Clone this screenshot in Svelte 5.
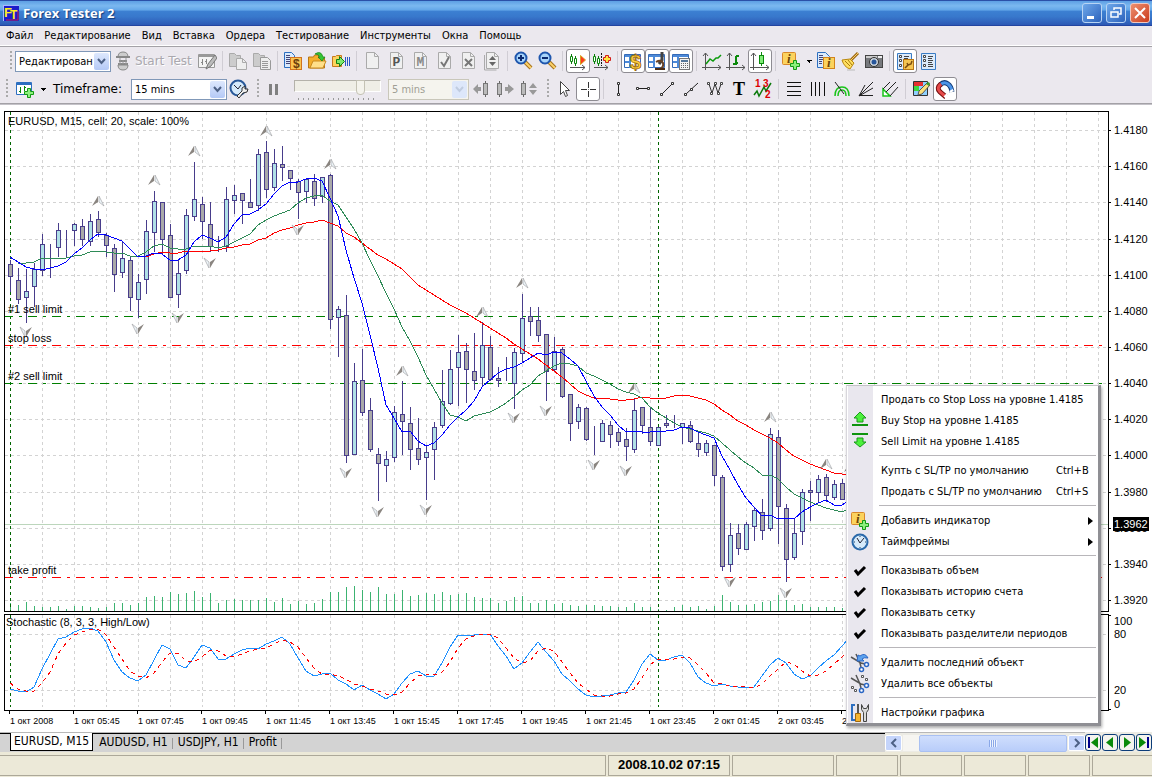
<script lang="ts">
  const menu = ["Файл", "Редактирование", "Вид", "Вставка", "Ордера", "Тестирование", "Инструменты", "Окна", "Помощь"];

  // Toolbar pictures, drawn on a 20x20 grid
  const page = `<path d="M4.500 1.500h8l4 4v12h-12z" fill="#f0f0f0" stroke="#aaa"/><path d="M12.500 1.500v4h4" fill="none" stroke="#aaa"/>`;
  const letter = (t: string, color: string) => `<text x="10.500" y="15" text-anchor="middle" font-family="Liberation Mono, monospace" font-weight="bold" font-size="13" fill="${color}">${t}</text>`;
  const axes = `<path d="M3.500 2v17M0 16.500h19" stroke="#555" fill="none"/><path d="M1 5l2.500-3 2.500 3M16 14l3 2.500-3 2.500" fill="none" stroke="#555"/>`;
  const plus = `<path d="M12.500 9.500h3v3h3v3h-3v3h-3v-3h-3v-3h3z" fill="#8cf07c" stroke="#129a12"/>`;
  const letterI = (x: number, y: number) => `<text x="${x}" y="${y}" font-family="Liberation Serif, serif" font-style="italic" font-weight="bold" font-size="13" fill="#6b4408">i</text>`;
  const info = `<rect x="1.500" y="1.500" width="13" height="12" rx="1" fill="#fbd35e" stroke="#d8882a"/>` + letterI(6, 12);
  const listing = `<path d="M2.500 2.500h14v16h-14z" fill="#dcebfb" stroke="#3a7cc4"/><path d="M4.500 4.500h2v2h-2zM4.500 8.500h2v2h-2zM4.500 13.500h2v2h-2z" fill="#fff" stroke="#444"/><path d="M9 5.500h5M9 7.500h4M9 9.500h5M9 11.500h4M9 13.500h5M9 15.500h5" stroke="#444"/>`;
  const panes = `<path d="M1.500 3.500h16v13h-16z" fill="#fff" stroke="#356bb8"/><path d="M2 5h15M7 4v13M2 11h5" stroke="#4d8ad8" stroke-width="2"/>`;
  const body = (x: number) => `<path d="M${x}.500 2v16" stroke="#666"/><rect x="${x - 2}.500" y="4.500" width="4" height="11" fill="#bbb" stroke="#777"/>`;
  const scissors = `<path d="M1 4l10 6 4 1M6 1l4 9 1 4" fill="none" stroke="#555" stroke-width="1.500"/><circle cx="16.500" cy="11.500" r="2" fill="#fff" stroke="#2b66c4" stroke-width="1.500"/><circle cx="11.500" cy="16.500" r="2" fill="#fff" stroke="#2b66c4" stroke-width="1.500"/>`;
  const clock = `<circle cx="10" cy="10" r="7.500" fill="#d6eafa" stroke="#2a69aa" stroke-width="2"/><path d="M7 6l3 5 4-5" fill="none" stroke="#223"/><path d="M10 4v1M10 15v1M4 10h1M15 10h1" stroke="#246"/>`;

  const icons: Record<string, string> = {
    tester: `<path d="M5 6q0-5 5-5t5 5z" fill="#ccc" stroke="#888"/><path d="M3 6h14M6 10h8M5 13h10" stroke="#888" stroke-width="2"/><path d="M7 7v7M13 7v7M10 9v4" stroke="#999"/><path d="M5 14h10q0 5-5 5t-5-5z" fill="#ccc" stroke="#888"/>`,
    sheetpen: `<path d="M1.500 3.500h16v13h-16z" fill="#f4f4f4" stroke="#999"/><path d="M2 5h15" stroke="#999" stroke-width="2"/><path d="M5.500 8v6M4 11.500h2M9.500 8v5M8 10.500h2" stroke="#888"/><path d="M18 4l-7 9-2 5 5-3 6-8z" fill="#bbb" stroke="#777"/>`,
    copy: `<path d="M1.500 2.500h5l2 2h4v11h-11z" fill="#ccc" stroke="#aaa"/><path d="M8.500 7.500h6l4 4v7h-10z" fill="#eee" stroke="#aaa"/><path d="M14.500 7.500v4h4" fill="none" stroke="#aaa"/>`,
    copylist: `<path d="M1.500 2.500h5l2 2h4v11h-11z" fill="#ccc" stroke="#aaa"/><path d="M8.500 6.500h7l3 3v9h-10z" fill="#eee" stroke="#999"/><path d="M10 10.500h6M10 12.500h6M10 14.500h6M10 16.500h6" stroke="#999"/>`,
    history: `<path d="M1.500 1.500h7l3 3v12h-10z" fill="#d9eafc" stroke="#2d6fc0"/><path d="M3 4.500h4M3 6.500h4M3 8.500h6M3 10.500h4M3 12.500h4" stroke="#447"/><rect x="7.500" y="6.500" width="11" height="12" fill="#f9c452" stroke="#d2741d"/><text x="10" y="17" font-family="Liberation Sans, sans-serif" font-weight="bold" font-size="12" fill="#6b3d0c">$</text>`,
    open: `<path d="M1.500 6h5l1-2h4v3h6v10h-16z" fill="#f4ae2b" stroke="#b87614"/><path d="M3 17l3-7h13l-3 7z" fill="#ffe08a" stroke="#c98a1e"/><path d="M8 3q6-4 8 3h2l-3 4-4-4h2q-1-3-5-3z" fill="#35c635" stroke="#128012" stroke-width=".7"/>`,
    run: `<path d="M1.500 5.500h3l1-1h5v11h-9z" fill="#fbd35e" stroke="#c7781c"/><path d="M5.500 8.500h3v-3l5 5-5 5v-3h-3z" fill="#7de86d" stroke="#128012"/><path d="M14.500 6v9M16.500 6v9M18.500 6v9" stroke="#2d59c4"/>`,
    blank: page,
    pageP: page + letter("P", "#555"),
    pageM: page + letter("M", "#888"),
    pageOk: page + `<path d="M7 11l3 4 5-9" stroke="#777" stroke-width="2" fill="none"/>`,
    pageX: page + `<path d="M7 8l7 7M14 8l-7 7" stroke="#777" stroke-width="2"/>`,
    pageUp: `<path d="M2.500 4v15h12" fill="none" stroke="#aaa"/>` + page + `<path d="M7 9l3.500-4 3.500 4zM7 11l3.500 4 3.500-4z" fill="#666"/>`,
    zoomin: `<path d="M12 11l6 6" stroke="#a8731c" stroke-width="4"/><path d="M12 11l6 6" stroke="#fbd26b" stroke-width="2"/><circle cx="8" cy="7" r="5.500" fill="#a7d4fa" stroke="#1e56ad" stroke-width="2"/><path d="M5 7h6M8 4v6" stroke="#0b2a70" stroke-width="2"/>`,
    zoomout: `<path d="M12 11l6 6" stroke="#a8731c" stroke-width="4"/><path d="M12 11l6 6" stroke="#fbd26b" stroke-width="2"/><circle cx="8" cy="7" r="5.500" fill="#a7d4fa" stroke="#1e56ad" stroke-width="2"/><path d="M5 7h6" stroke="#0b2a70" stroke-width="2"/>`,
    autoscroll: `<path d="M3.500 3v10M7.500 5v10" stroke="#0a7a0a"/><path d="M2.500 5.500h2v5h-2zM6.500 7.500h2v5h-2z" fill="#fff" stroke="#0a8a0a"/><path d="M12.500 4.500v9l5-4.500z" fill="#ff3b1f" stroke="#d8a020"/><path d="M2 16.500h15M14 14l3 2.500-3 2.500" stroke="#555" fill="none"/>`,
    shift: `<path d="M2.500 3v10M6.500 5v10" stroke="#0a7a0a"/><path d="M1.500 5.500h2v5h-2zM5.500 7.500h2v5h-2z" fill="#fff" stroke="#0a8a0a"/><path d="M9.500 2v13" stroke="#111" stroke-dasharray="2 1"/><path d="M13.500 4.500h3v2h2v3h-2v2h-3v-2h-2v-3h2z" fill="#ffe740" stroke="#d21c1c"/><path d="M2 16.500h14M13 14l3 2.500-3 2.500" stroke="#555" fill="none"/>`,
    account: panes + `<text x="7" y="18" font-family="Liberation Sans, sans-serif" font-weight="bold" font-size="20" fill="#ffcf3d" stroke="#98650a" stroke-width=".8">$</text>`,
    journal: panes + `<path d="M15 1v8l-3 4" stroke="#444" stroke-width="3" fill="none"/><path d="M9 11q5-3 7 1 1 4-3 6" stroke="#6a4326" stroke-width="2" fill="none"/><path d="M8 18h10" stroke="#4a2c14" stroke-width="2"/>`,
    calc: panes + `<rect x="8.500" y="7.500" width="10" height="11" fill="#f4f4f4" stroke="#777"/><path d="M10 10h7" stroke="#579" stroke-width="2"/><path d="M10 12.500h7M10 14.500h7M10 16.500h7" stroke="#666" stroke-dasharray="1 1"/>`,
    line: axes + `<path d="M4 13l4-5 3 2 3-3h2l3-3" stroke="#0b9a0b" stroke-width="1.500" fill="none"/>`,
    bars: axes + `<path d="M7 13h3v-8M10 5h3M10 12h2" stroke="#0b8a0b" stroke-width="2" fill="none"/>`,
    candles: axes + `<path d="M11.500 1v14" stroke="#0b8a0b"/><rect x="9.500" y="4.500" width="4" height="8" fill="#7fec77" stroke="#0b8a0b"/>`,
    indicator: info + plus,
    indlist: `<path d="M1.500 1.500h8l4 4v11h-12z" fill="#d9eafc" stroke="#2d6fc0"/><path d="M3 4.500h4M3 6.500h4M3 8.500h4M3 10.500h3M3 12.500h3" stroke="#447"/><rect x="7.500" y="6.500" width="11" height="11" fill="#fbd35e" stroke="#d2841d"/>` + letterI(11, 16),
    broom: `<path d="M11 9l7-7" stroke="#a06a14" stroke-width="3"/><path d="M11 9l7-7" stroke="#f5cf6a"/><path d="M2 9l8-1 4 4-4 6q-6-2-8-9z" fill="#ffdf60" stroke="#b8860b"/><path d="M5 10l5 5M8 9l4 5" stroke="#a77a10"/><path d="M7 19h8" stroke="#bbb"/>`,
    camera: `<rect x="1.500" y="4.500" width="17" height="12" fill="#77797d" stroke="#444"/><path d="M2 6h11" stroke="#ccc" stroke-width="2"/><path d="M14 6h4" stroke="#eee" stroke-width="2"/><circle cx="10" cy="11" r="4.500" fill="#cdd5dd" stroke="#333"/><circle cx="10" cy="11" r="2.500" fill="#27559a"/>`,
    listset: listing + `<rect x="8.500" y="8.500" width="10" height="10" fill="#f5c550" stroke="#b87614"/><path d="M10 17l3-3-1-2M13 14l3-1 1-3" stroke="#7a4c0d" stroke-width="1.500" fill="none"/>`,
    list: listing,
    newchart: `<path d="M1.500 3.500h15v12h-15z" fill="#fff" stroke="#2d6fc0"/><path d="M2 5h14" stroke="#2d6fc0" stroke-width="2"/><path d="M5.500 8v6M4 12.500h1M9.500 7v5M9 8.500h2" stroke="#0b8a0b"/>` + plus,
    clocktool: `<circle cx="9" cy="9" r="7.500" fill="#d6eafa" stroke="#2a5a9a" stroke-width="2"/><path d="M5 6l4 4 3-4" fill="none" stroke="#223"/><path d="M8 17l5-5 0-3 3-2 0 3 3 0-1 3-4 1-4 5z" fill="#eee" stroke="#333"/>`,
    pause: `<path d="M5 5h3v11h-3zM11 5h3v11h-3z" fill="#808080"/>`,
    moveleft: `<path d="M7 5v3h3v4h-3v3l-5-5z" fill="#999"/>` + body(14),
    moveright: `<path d="M13 5v3h-3v4h3v3l6-5z" fill="#999"/>` + body(4),
    moveboth: `<path d="M10 9l4-5 4 5zM10 11l4 5 4-5z" fill="#999"/>` + body(4),
    pointer: `<path d="M6.500 2.500v13l3-3 2 5 2-1-2-5h4z" fill="#fff" stroke="#444"/>`,
    cross: `<path d="M10.500 3v6M10.500 12v6M3 10.500h6M12 10.500h6" stroke="#333"/><path d="M10 10.500h1" stroke="#777"/>`,
    vline: `<path d="M9.500 5v10" stroke="#222"/><path d="M8.500 3.500h2v2h-2zM8.500 14.500h2v2h-2z" fill="#fff" stroke="#333"/>`,
    hline: `<path d="M5 9.500h10" stroke="#222"/><path d="M3.500 8.500h2v2h-2zM14.500 8.500h2v2h-2z" fill="#fff" stroke="#333"/>`,
    trend: `<path d="M5 15l10-10" stroke="#222"/><path d="M3.500 14.500h2v2h-2zM14.500 3.500h2v2h-2z" fill="#fff" stroke="#333"/>`,
    ray: `<path d="M5 15l12-11" stroke="#222"/><path d="M3.500 14.500h2v2h-2zM9.500 9.500h2v2h-2z" fill="#fff" stroke="#333"/>`,
    poly: `<path d="M4 5l3 9 3-9 3 9 3-9" stroke="#333" fill="none"/><path d="M2.500 3.500h2v2h-2zM5.500 13.500h2v2h-2zM9.500 3.500h2v2h-2zM12.500 13.500h2v2h-2zM15.500 3.500h2v2h-2z" fill="#fff" stroke="#444"/>`,
    text: `<text x="4" y="16" font-family="Liberation Serif, serif" font-size="18" font-weight="bold">T</text>`,
    waves: `<path d="M1 16l3-4 2 5 5-9 2 4 5-8" stroke="#0b7a0b" fill="none" stroke-width="1.500"/><g fill="#d00" font-family="Liberation Sans, sans-serif" font-size="10" font-weight="bold"><text x="2" y="8">1</text><text x="10" y="8">3</text><text x="12" y="19">2</text></g>`,
    levels: `<path d="M3 3.500h14M3 7.500h14M3 12.500h14M3 16.500h14" stroke="#111"/>`,
    columns: `<path d="M3.500 3v14M7.500 3v14M11.500 3v14M16.500 3v14" stroke="#111"/>`,
    arcs: `<path d="M3 17q0-9 7-9t7 9M6 17q0-6 4-6t4 6" fill="none" stroke="#19c419" stroke-width="1.500"/><path d="M3 3l9 12" stroke="#222"/>`,
    fan: `<path d="M3 17l14-14M3 17l14-8M3 16.500h14M3 17l6-11" stroke="#222" fill="none"/>`,
    pitchfork: `<path d="M3 17v-7l7 7z" fill="#fff" stroke="#19c419" stroke-width="1.500"/><path d="M3 10l7-7M6 13l10-10M10 17l8-9" stroke="#222"/>`,
    colors: `<path d="M2.500 2.500h14v14h-14z" fill="#8fd0ff" stroke="#333"/><path d="M3 3h9v4h-9z" fill="#e83030"/><path d="M3 7h5v5h-5z" fill="#3fd83f"/><path d="M7 16l1-4 8-8 3 2-8 9z" fill="#fbe07a" stroke="#555"/><path d="M15 5l2-2 2 1-1 3z" fill="#3a9a2a"/>`,
    magnet: `<g fill="none"><path d="M5 6q4-4 8-1 3 2 4 8" stroke="#123a78" stroke-width="5"/><path d="M5 6q4-4 8-1 3 2 4 7" stroke="#4b94e8" stroke-width="3"/><path d="M6 5q-5 4-1 8l6 5" stroke="#761010" stroke-width="5"/><path d="M6 5q-5 4-1 8l5 4" stroke="#e64a4a" stroke-width="3"/><path d="M16 11l1 2M10 16l2 2" stroke="#fff" stroke-width="4"/></g>`,
    buystop: `<path d="M10 1l6 6h-3v4h-6v-4h-3z" fill="#4cf03c" stroke="#1a9a1a"/><path d="M2 14h16" stroke="#0e940e" stroke-width="2"/>`,
    selllimit: `<path d="M2 2h16" stroke="#0e940e" stroke-width="2"/><path d="M10 15l6-5h-3v-4h-6v4h-3z" fill="#4cf03c" stroke="#1a9a1a"/>`,
    clock,
    check: `<path d="M5 9l3 4 7-7" stroke="#000" stroke-width="3" fill="none"/>`,
    undo: scissors + `<path d="M7 8l1-6 2 1q5-4 8 2-4-1-6 1l2 2z" fill="#5ba2ee" stroke="#2b66c4"/>`,
    clear: scissors + `<path d="M11.500 1.500h2v2h-2zM15.500 4.500h2v2h-2zM1.500 12.500h2v2h-2zM4.500 15.500h2v2h-2z" fill="#fff" stroke="#555"/>`,
    settings: `<path d="M5 2h-3v15h4" stroke="#2d6fc0" fill="none" stroke-width="2"/><path d="M8 1v9" stroke="#555" stroke-width="2"/><path d="M5.500 10.500h5v8h-5z" fill="#f5b52f" stroke="#a2680b"/><path d="M11.500 1.500v5l2 3v9h3v-9l2-3v-5l-2 4h-3z" fill="#d8d8d8" stroke="#444"/>`
  };

  // "|" is a separator, a leading "!" marks a pressed button
  const files = "copy copylist | history open run | blank pageP pageM pageOk pageX pageUp | zoomin zoomout | !autoscroll shift | !account !journal !calc | line bars !candles | indicator".split(" ");
  const views = "indlist broom camera | !listset list".split(" ");
  const moves = "moveleft moveright moveboth".split(" ");
  const drawing = "pointer !cross | vline hline trend ray poly text waves | levels columns arcs fan pitchfork | colors !magnet".split(" ");

  const STEP = 8;
  const X0 = 10;
  const px = (i: number) => X0 + STEP * i;
  const toPath = (ys: number[], from = 0) =>
    ys.map((y, i) => `${i ? "L" : "M"}${px(i + from)} ${y}`).join("");

  // high, body top, body bottom, low, rising
  const bars = [
    [260,264,276,292,0],[268,280,299,304,0],[269,291,297,323,1],[263,269,286,307,1],[234,244,270,276,1],
    [244,248,248,278,0],[223,230,247,257,1],[230,232,232,257,0],[223,224,230,246,1],[219,226,239,246,0],
    [214,221,241,246,1],[211,219,232,237,0],[233,235,245,257,0],[244,248,274,292,0],[241,258,272,278,1],
    [257,260,297,311,0],[274,282,299,318,1],[220,231,279,294,1],[191,201,232,252,1],[202,202,239,254,0],
    [224,235,297,298,0],[260,273,294,308,1],[209,215,270,274,1],[162,199,216,221,1],[197,204,221,239,0],
    [202,224,246,252,0],[236,244,244,252,0],[187,199,246,252,1],[185,195,200,214,1],[193,193,200,224,0],
    [179,202,207,208,0],[149,154,205,211,1],[141,152,189,198,0],[149,163,187,191,1],[146,164,167,181,0],
    [170,170,178,190,0],[179,181,192,219,0],[178,179,191,203,1],[174,181,198,206,0],[177,177,196,203,1],
    [174,175,319,329,0],[306,309,317,357,1],[295,315,455,463,0],[363,381,454,455,1],[349,380,412,416,0],
    [398,410,449,452,0],[448,454,463,501,0],[451,459,465,482,1],[406,412,457,462,1],[381,414,421,455,0],
    [407,423,449,470,0],[418,448,459,465,0],[445,452,457,500,1],[422,427,449,480,1],[370,401,425,428,1],
    [350,369,403,405,1],[335,352,367,406,1],[343,351,369,403,0],[333,371,380,390,0],[322,345,377,387,1],
    [336,347,379,381,0],[367,378,380,387,0],[357,380,380,381,0],[348,352,383,409,1],[294,318,353,363,1],
    [307,316,321,336,0],[307,320,335,342,0],[334,334,371,401,0],[337,351,369,372,1],[347,349,396,398,0],
    [394,394,423,441,0],[404,407,421,429,1],[407,408,439,441,0],[426,440,440,455,0],[420,423,441,442,1],
    [421,425,434,448,0],[428,432,441,446,0],[428,439,446,461,0],[399,410,449,453,1],[407,407,425,434,0],
    [408,427,441,446,0],[427,427,445,445,1],[415,423,425,428,0],[415,425,425,428,0],[423,423,427,444,1],
    [421,425,441,443,0],[431,443,449,457,0],[440,443,452,456,1],[445,445,475,486,0],[475,477,566,571,0],
    [523,535,564,572,1],[524,533,548,555,0],[522,524,549,550,1],[507,510,526,541,1],[499,512,530,540,0],
    [428,434,528,531,1],[430,437,506,544,0],[504,508,559,582,0],[518,533,557,560,1],[489,492,531,545,1],
    [481,490,492,521,0],[475,479,492,503,1],[474,477,495,502,0],[480,484,497,500,1],[479,483,499,499,0]
  ];

  const fast = [257,262,267,269,270,268,266,262,254,248,240,234,235,238,241,249,257,256,253,254,260,260,255,242,235,238,242,237,224,215,214,210,204,194,186,182,182,179,178,181,198,216,250,278,303,335,368,405,418,432,431,441,446,443,435,425,417,410,401,387,380,373,369,367,363,358,353,355,352,353,359,366,381,396,407,415,425,432,431,432,432,431,431,430,427,428,432,435,438,456,470,485,498,507,516,515,519,518,519,512,507,503,500,505,505,500];
  const medium = [263,263,262,258,258,258,258,256,255,252,251,252,253,253,256,256,252,246,244,248,249,249,246,246,246,248,246,242,238,234,225,220,216,213,210,203,198,196,195,201,205,217,229,243,260,276,293,309,327,341,357,375,389,403,415,417,421,416,414,412,408,403,397,390,385,376,371,366,363,364,366,373,376,380,384,389,392,394,398,407,413,418,423,427,429,431,433,436,443,450,457,463,468,475,475,479,487,494,498,502,505,508,510,512,508];
  const slow = [257,254,252,253,253,251,251,251,251,250,248,247,245,244,240,238,233,230,228,225,223,222,220,223,226,233,237,243,249,255,259,264,269,277,285,290,295,300,305,309,313,318,323,328,333,338,344,349,354,359,365,371,377,384,391,395,398,398,399,400,400,399,397,398,398,398,396,395,396,398,400,404,410,415,421,425,430,434,438,443,450,456,460,464,467,470,473,474,474];
  const volume = [8,6,9,5,4,4,5,2,5,5,4,3,4,8,8,6,8,14,15,14,19,17,18,20,14,18,8,11,12,11,11,11,13,9,13,7,10,7,8,12,19,19,24,25,21,19,24,17,17,21,15,16,18,17,19,16,17,18,14,13,13,8,10,14,15,8,8,11,7,8,6,5,6,6,5,5,4,4,8,4,4,2,1,4,6,4,5,2,5,16,9,6,6,7,9,10,16,11,6,7,4,4,4,4,3];

  const main = [689,691,692,687,669,654,639,637,632,629,628,631,642,660,672,678,681,675,660,645,649,665,668,657,645,648,659,659,654,650,648,649,644,641,637,644,658,671,676,674,673,680,684,690,685,690,694,699,694,683,674,671,676,676,663,647,635,635,635,634,634,646,656,669,663,652,642,652,661,674,681,689,695,697,696,695,693,692,680,664,654,660,660,657,655,663,677,683,686,684,686,687,688,687,676,665,658,663,674,679,676,668,661,655,646,637];
  const signal = [683,689,691,691,683,672,654,643,635,632,629,629,635,647,659,671,676,678,673,662,653,653,661,662,657,650,651,656,657,654,651,649,648,644,640,642,647,658,668,674,674,676,679,684,686,689,691,694,695,692,683,676,674,675,672,662,648,639,636,634,634,638,648,658,663,661,651,648,651,662,673,683,689,695,696,696,694,693,689,678,665,659,659,659,657,658,665,673,683,684,686,686,687,688,684,676,669,662,664,671,676,675,671,664,657,649];

  const tops = [[98,201],[154,180],[194,151],[266,131],[330,164],[522,283],[482,312],[402,371],[634,388],[770,417],[826,464],[850,467]];
  const bottoms = [[26,332],[138,329],[178,318],[210,263],[298,230],[346,473],[378,512],[426,510],[514,418],[546,411],[594,465],[626,471],[730,582],[786,593]];

  const prices = [130,166,202,239,275,311,347,383,419,455,492,528,564,600].map((y, i) => ({ y, label: (1.418 - i * 0.002).toFixed(4) }));
  const columns = Array.from({ length: 60 }, (_, i) => X0 + 32 * (i + 1));
  const dividers = [10, 658];
  const orders = [
    { y: 316, name: "#1 sell limit", color: "#008000" },
    { y: 345, name: "stop loss", color: "#f00" },
    { y: 383, name: "#2 sell limit", color: "#008000" },
    { y: 577, name: "take profit", color: "#f00" }
  ];
  const times = ["1 окт 2008", "1 окт 05:45", "1 окт 07:45", "1 окт 09:45", "1 окт 11:45", "1 окт 13:45", "1 окт 15:45", "1 окт 17:45", "1 окт 19:45", "1 окт 21:45", "1 окт 23:45", "2 окт 01:45", "2 окт 03:45", "2 окт 05:45"];

  type Item = { label: string; icon?: string; keys?: string; sub?: boolean };
  const groups: Item[][] = [
    [
      { label: "Продать со Stop Loss на уровне 1.4185" },
      { label: "Buy Stop на уровне 1.4185", icon: "buystop" },
      { label: "Sell Limit на уровне 1.4185", icon: "selllimit" }
    ],
    [
      { label: "Купть с SL/TP по умолчанию", keys: "Ctrl+B" },
      { label: "Продать с SL/TP по умолчанию", keys: "Ctrl+S" }
    ],
    [
      { label: "Добавить индикатор", icon: "indicator", sub: true },
      { label: "Таймфреймы", icon: "clock", sub: true }
    ],
    [
      { label: "Показывать объем", icon: "check" },
      { label: "Показывать историю счета", icon: "check" },
      { label: "Показывать сетку", icon: "check" },
      { label: "Показывать разделители периодов", icon: "check" }
    ],
    [
      { label: "Удалить последний объект", icon: "undo" },
      { label: "Удалить все объекты", icon: "clear" }
    ],
    [{ label: "Настройки графика", icon: "settings" }]
  ];

  const tabs = ["EURUSD, M15", "AUDUSD, H1", "USDJPY, H1", "Profit"];
  let active = $state("EURUSD, M15");

  const jumps = [
    { name: "В начало", d: "M12 2v11l-7-5.500z", bar: 3 },
    { name: "Назад", d: "M10 2v11l-7-5.500z" },
    { name: "Вперед", d: "M4 2v11l7-5.500z" },
    { name: "В конец", d: "M2 2v11l7-5.500z", bar: 11 }
  ];
</script>

{#snippet glyph(name: string)}
  <svg class="glyph" width="20" height="20" viewBox="0 0 20 20" aria-hidden="true">{@html icons[name]}</svg>
{/snippet}

{#snippet tools(list: string[])}
  {#each list as t}
    {#if t === "|"}
      <span class="sep"></span>
    {:else}
      <button class="tool" class:on={t[0] === "!"} aria-label={t.replace("!", "")}>{@render glyph(t.replace("!", ""))}</button>
    {/if}
  {/each}
{/snippet}

{#snippet drop()}
  <span class="arrow"><svg width="9" height="7" viewBox="0 0 9 7"><path d="M1 1l3.500 4 3.500-4" fill="none" stroke="currentColor" stroke-width="2" /></svg></span>
{/snippet}

<div class="app">
  <header class="title">
    <svg width="16" height="16" viewBox="0 0 16 16" aria-hidden="true">
      <rect width="16" height="16" rx="1" fill="#1c1cc8" />
      <path d="M0 0h16M0 0v16" stroke="#aab4ff" stroke-width="2" />
      <path d="M3 15h12v-9" stroke="#c02050" fill="none" />
      <text x="1" y="12" font-size="13">F</text>
      <text x="7" y="14" font-size="12">T</text>
    </svg>
    <h1>Forex Tester 2</h1>
    <button class="win" aria-label="Свернуть"><svg width="18" height="18" viewBox="0 0 18 18"><path d="M4 13.500h7" stroke="#fff" stroke-width="3" /></svg></button>
    <button class="win" aria-label="Восстановить"><svg width="18" height="18" viewBox="0 0 18 18"><path d="M7 6v-2h7v6h-2" fill="none" stroke="#fff" stroke-width="1.500" /><rect x="4" y="8" width="7" height="5" fill="none" stroke="#fff" stroke-width="1.500" /></svg></button>
    <button class="win close" aria-label="Закрыть"><svg width="18" height="18" viewBox="0 0 18 18"><path d="M4 4l10 10M14 4l-10 10" stroke="#fff" stroke-width="2" /></svg></button>
  </header>

  <nav class="menu">
    {#each menu as m}<button>{m}</button>{/each}
  </nav>

  <div class="bars">
    <div class="bar">
      <span class="grip first"></span>
      <div class="combo">
        <select aria-label="Режим"><option>Редактирование</option></select>
        {@render drop()}
      </div>
      <button class="tool start" disabled>{@render glyph("tester")}<span>Start Test</span></button>
      {@render tools(["sheetpen", "|"])}
      {@render tools(files)}
      <button class="more" aria-label="Еще"></button>
      {@render tools(views)}
    </div>
    <div class="bar">
      <span class="grip"></span>
      {@render tools(["newchart"])}
      <button class="more" aria-label="Еще"></button>
      <label class="frame" for="tf">Timeframe:</label>
      <div class="combo">
        <select id="tf"><option>15 mins</option></select>
        {@render drop()}
      </div>
      {@render tools(["clocktool"])}
      <span class="grip mid"></span>
      {@render tools(["pause"])}
      <div class="speed"><input type="range" min="0" max="100" value="80" aria-label="Скорость" disabled /></div>
      <div class="combo off">
        <select aria-label="Шаг" disabled><option>5 mins</option></select>
        {@render drop()}
      </div>
      {@render tools(moves)}
      <span class="grip mid"></span>
      {@render tools(drawing)}
    </div>
  </div>

  <main class="work">
    <div class="plots">
      <svg class="pane" width="100%" height="501">
        <g transform="translate(-4 -111)" shape-rendering="crispEdges">
          <g class="grid">
            {#each columns as x}<path d="M{x}.5 112V611" />{/each}
            {#each prices as p}<path d="M5 {p.y}.5H4000" />{/each}
          </g>
          <path d="M5 524.500H4000" stroke="#bcd6bc" />
          {#each volume as v, i}<path d="M{px(i)}.500 611v-{v}" stroke="#3cb371" />{/each}
          {#each dividers as x}<path class="divider" d="M{x}.500 112V611" />{/each}
          {#each orders as o}<path d="M4 {o.y}.500H4000" stroke={o.color} stroke-dasharray="9 6 3 6" />{/each}
          {#each bars as [high, top, bottom, low, up], i}
            <path d="M{px(i)}.500 {high}V{low}" stroke="#483d8b" />
            <rect x={px(i) - 2 + 0.5} y={top + 0.5} width="4" height={bottom - top} fill={up ? "#b0e0e6" : "#a9a9a9"} stroke="#483d8b" />
          {/each}
          <path class="curve" d={toPath(slow, 17)} stroke="#f00" />
          <path class="curve" d={toPath(medium, 1)} stroke="#2e8b57" />
          <path class="curve" d={toPath(fast)} stroke="#00f" />
        </g>
        <g transform="translate(-4 -111)">
          {#each tops as [x, y]}
            <path d="M{x} {y - 5}l-6 10 6-4z" fill="#8a8580" />
            <path d="M{x + 1} {y - 5}l5 10-5-4z" fill="#eef6fa" stroke="#a5a5a8" stroke-width=".7" />
          {/each}
          {#each bottoms as [x, y]}
            <path d="M{x} {y + 5}l6-10-6 4z" fill="#8a8580" />
            <path d="M{x - 1} {y + 5}l-5-10 5 4z" fill="#eef6fa" stroke="#a5a5a8" stroke-width=".7" />
          {/each}
          <text x="8" y="125">EURUSD, M15, cell: 20, scale: 100%</text>
          {#each orders as o}<text x="8" y={o.y - 3}>{o.name}</text>{/each}
        </g>
      </svg>
      <svg class="pane" width="100%" height="97">
        <g transform="translate(-4 -614)" shape-rendering="crispEdges">
          <g class="grid">
            {#each columns as x}<path d="M{x}.5 615V707" />{/each}
            <path d="M5 634.500H4000M5 690.500H4000" />
          </g>
          {#each dividers as x}<path class="divider" d="M{x}.500 615V707" />{/each}
          <path class="curve" d={toPath(main)} stroke="#1e90ff" />
          <path class="curve" d={toPath(signal)} stroke="#f00" stroke-dasharray="4 4" />
        </g>
        <text x="2" y="12">Stochastic (8, 3, 3, High/Low)</text>
      </svg>
      <svg class="dates" width="100%" height="21">
        {#each times as t, i}
          <path d="M{5 + 64 * i}.500 0v3" stroke="#000" />
          <text x={6 + 64 * i} y="13">{t}</text>
        {/each}
      </svg>
    </div>
    <svg class="scale" width="43" height="621">
      <g transform="translate(-1109 -111)">
        {#each prices as p}
          <path d="M1109 {p.y}.500h2" stroke="#000" />
          <text x="1114" y={p.y + 4}>{p.label}</text>
        {/each}
        <rect x="1113" y="517" width="36" height="14" />
        <text x="1114" y="528" fill="#fff">1.3962</text>
        <path d="M1109 615.500h2M1109 709.500h2" stroke="#000" />
        <text x="1114" y="625">100</text>
        <text x="1114" y="638">80</text>
        <text x="1114" y="694">20</text>
        <text x="1114" y="708">0</text>
      </g>
    </svg>

    <div class="popup" role="menu">
      {#each groups as group, g}
        {#if g}<hr />{/if}
        {#each group as item}
          <button role="menuitem">
            <span class="mark">{#if item.icon}{@render glyph(item.icon)}{/if}</span>
            <span class="name">{item.label}</span>
            {#if item.keys}<kbd>{item.keys}</kbd>{/if}
            {#if item.sub}<i class="sub"></i>{/if}
          </button>
        {/each}
      {/each}
    </div>
  </main>

  <div class="sheets">
    <div class="tabs">
      {#each tabs as t}
        <button class:active={t === active} onclick={() => (active = t)}>{t}</button>
      {/each}
    </div>
    <div class="scroll">
      <button class="step" aria-label="Влево"><svg width="8" height="10" viewBox="0 0 8 10"><path d="M6 1l-4 4 4 4" fill="none" stroke="#4d6185" stroke-width="2" /></svg></button>
      <div class="track"><div class="thumb"></div></div>
      <button class="step" aria-label="Вправо"><svg width="8" height="10" viewBox="0 0 8 10"><path d="M2 1l4 4-4 4" fill="none" stroke="#4d6185" stroke-width="2" /></svg></button>
    </div>
    <div class="jumps">
      {#each jumps as j}
        <button aria-label={j.name}><svg width="14" height="15" viewBox="0 0 14 15"><path d={j.d} fill="#0a8a0a" />{#if j.bar}<path d="M{j.bar} 2v11" stroke="#00008b" stroke-width="2" />{/if}</svg></button>
      {/each}
    </div>
  </div>

  <footer class="status">
    <span class="wide"></span>
    <span class="time">2008.10.02 07:15</span>
    <span class="mid"></span>
    <span></span>
    <span></span>
    <span></span>
    <span></span>
    <span class="last"></span>
  </footer>
</div>

<style>
  :global(body) {
    background: #ece9d8;
    overflow: hidden;
  }

  .app {
    --ui: Tahoma, "DejaVu Sans Condensed", "DejaVu Sans", sans-serif;
    --face: #ebe8ee;
    min-height: 100vh;
    display: flex;
    flex-direction: column;
    font: 11px/14px var(--ui);
    color: #000;
  }

  button {
    font: inherit;
    color: inherit;
    border: 0;
    padding: 0;
    background: none;
  }

  svg {
    display: block;
    flex: none;
  }

  /* window caption */
  .title {
    height: 26px;
    box-sizing: border-box;
    display: flex;
    align-items: center;
    gap: 4px;
    padding: 0 2px 0 3px;
    border-top: 1px solid #2b50a8;
    border-bottom: 1px solid #2344a0;
    background: linear-gradient(#5d9fe4, #7bb8f0 20%, #63a6e8 38%, #3c80d2 42%, #3878cc 65%, #2c58b4);
    color: #fff;
  }

  .title text {
    font-family: "Liberation Sans", sans-serif;
    font-weight: bold;
    fill: #ffee20;
  }

  .title h1 {
    flex: 1;
    margin: 0;
    font: bold 13px/18px "Open Sans", sans-serif;
    text-shadow: 1px 1px 1px #123a7c;
  }

  .win {
    width: 20px;
    height: 20px;
    box-sizing: border-box;
    border: 1px solid #b8d4f4;
    border-radius: 3px;
    background: linear-gradient(135deg, #6ea8ea, #2c62bc);
  }

  .close {
    background: linear-gradient(135deg, #ec9070, #cc3c1c);
    border-color: #f0c8c0;
  }

  .menu {
    display: flex;
    gap: 11px;
    height: 19px;
    padding-left: 6px;
    background: var(--face);
    border-bottom: 1px solid #fff;
  }

  .bars {
    background: var(--face);
    border-top: 1px solid #a3a1a6;
    border-bottom: 1px solid #a3a1a6;
  }

  .bar {
    display: flex;
    align-items: center;
    height: 28px;
  }

  .grip {
    width: 3px;
    height: 20px;
    margin: 0 4px 0 6px;
    background: radial-gradient(circle at 1px 1px, #aaa 1px, #fff0 1px) 0 0 / 3px 4px;
  }

  .grip.first {
    margin: 0 2px 0 10px;
  }

  .grip.mid {
    margin: 0 2px 0 6px;
  }

  .tool {
    flex: none;
    width: 24px;
    height: 24px;
    box-sizing: border-box;
    display: flex;
    align-items: center;
    justify-content: center;
  }

  .tool.on {
    border: 1px solid #8e8c92;
    border-radius: 3px;
    background: #fff;
  }

  .start {
    width: 84px;
    justify-content: flex-start;
    gap: 2px;
    padding-left: 2px;
    font: 12px/16px "DejaVu Sans", sans-serif;
    color: #aaa8ae;
    text-shadow: 1px 1px #fff;
    white-space: nowrap;
  }

  .sep {
    flex: none;
    width: 1px;
    height: 20px;
    margin: 0 3px;
    background: #d0cdd4;
  }

  .more {
    flex: none;
    width: 11px;
    height: 20px;
    background: conic-gradient(from -45deg at 50% 100%, #000 90deg, #0000 0) 50% 50% / 6px 3px no-repeat;
  }

  .frame {
    margin: 0 10px 0 5px;
    width: 68px;
    font: 12px/16px "DejaVu Sans", sans-serif;
    white-space: nowrap;
  }

  .combo {
    flex: none;
    display: grid;
    width: 96px;
    height: 21px;
    box-sizing: border-box;
    border: 1px solid #8098b8;
    background: #fff;
  }

  .combo select,
  .combo .arrow {
    grid-area: 1 / 1;
  }

  .combo select {
    appearance: none;
    min-width: 0;
    width: 100%;
    height: 19px;
    padding: 0 17px 0 3px;
    border: 0;
    background: none;
    font: 11px/17px var(--ui);
    color: #000;
  }

  .arrow {
    justify-self: end;
    width: 15px;
    height: 17px;
    margin: 1px;
    display: flex;
    align-items: center;
    justify-content: center;
    border-radius: 2px;
    background: linear-gradient(#dde8fd, #b4c9f6);
    color: #4d6185;
    pointer-events: none;
  }

  .combo.off {
    width: 81px;
    border-color: #c9c7ba;
    background: #f5f4ee;
  }

  .combo.off select {
    color: #a19f95;
    opacity: 1;
  }

  .combo.off .arrow {
    color: #c0cce0;
    background: #dde7fa;
  }

  .speed {
    flex: none;
    width: 87px;
    height: 22px;
    margin: 0 7px 0 8px;
    background: repeating-linear-gradient(90deg, #999 0 1px, #0000 1px 5px) 4px 100% / 80px 2px no-repeat;
  }

  .speed input {
    appearance: none;
    display: block;
    width: 100%;
    height: 12px;
    margin: 2px 0 0;
    box-sizing: border-box;
    border: 1px solid #b4b2aa;
    border-color: #b4b2aa #fff #fff #b4b2aa;
    background: #efeee6;
  }

  .speed input::-webkit-slider-thumb {
    appearance: none;
    width: 9px;
    height: 15px;
    margin-top: 2px;
    border: 1px solid #c4c2b4;
    border-radius: 1px 1px 4px 4px;
    background: #f4f3ec;
  }

  /* chart window */
  .work {
    flex: 1;
    position: relative;
    display: flex;
    padding: 6px 0 0 4px;
    border-top: 1px solid #c4c2c8;
    background: #fff;
    font: 11px/13px "Liberation Sans", Arial, sans-serif;
  }

  .plots {
    flex: 1;
    min-width: 0;
  }

  .pane {
    box-sizing: border-box;
    margin-bottom: 2px;
    outline: 1px solid #000;
    outline-offset: -1px;
  }

  .pane + .pane {
    margin-bottom: 0;
  }

  .grid path {
    stroke: #d3d3d3;
    stroke-dasharray: 3 3;
  }

  .divider {
    stroke: #006400;
    stroke-dasharray: 3 3;
  }

  .curve {
    fill: none;
  }

  .dates {
    font-size: 9px;
  }

  .popup {
    position: absolute;
    left: 846px;
    top: 280px;
    width: 255px;
    box-sizing: border-box;
    padding: 3px 1px 0;
    border: 1px solid #d8d6dc;
    border-width: 1px 3px 3px 1px;
    border-color: #c4c2c8 #8f8f94 #8f8f94 #d8d6dc;
    background: linear-gradient(90deg, #fff 1px, #e9e7ee 1px 26px, #fff 26px);
    box-shadow: 1px 2px 3px #0005;
    font: 11px/14px var(--ui);
  }

  .popup button {
    display: flex;
    align-items: center;
    width: 100%;
    height: 21px;
    text-align: left;
  }

  .mark {
    width: 22px;
    margin: 0 9px 0 2px;
  }

  .popup .name {
    flex: 1;
    white-space: nowrap;
  }

  .popup kbd {
    width: 32px;
    margin-right: 9px;
    font: inherit;
  }

  .sub {
    margin-right: 4px;
    border: 4px solid #0000;
    border-left: 5px solid #000;
    border-right: 0;
  }

  .popup hr {
    height: 1px;
    margin: 3px 1px 4px 31px;
    border: 0;
    background: #b8b6ba;
  }

  /* chart tabs and scrolling */
  .sheets {
    display: flex;
    height: 20px;
    background: #ecebe4;
  }

  .tabs {
    flex: 1;
    display: flex;
    padding-left: 10px;
    border-top: 1px solid #b8b8b8;
    background: #d3d3d3;
    box-shadow: inset 0 1px #000;
    font: 12px/18px var(--ui);
  }

  .tabs button {
    padding: 0 5px;
    margin: 0 0 1px;
    white-space: nowrap;
    background: linear-gradient(#999, #999) 100% 5px / 1px 11px no-repeat;
  }

  .tabs .active {
    padding: 0 3px;
    margin-right: 1px;
    border: 1px solid #000;
    border-top: 0;
    background: #fff;
    line-height: 17px;
  }

  .scroll {
    display: flex;
    gap: 1px;
    width: 200px;
    padding: 2px 0 1px;
    border-top: 1px solid #b8b8b8;
    box-sizing: border-box;
  }

  .step {
    width: 17px;
    display: flex;
    align-items: center;
    justify-content: center;
    border: 1px solid #fff;
    border-radius: 2px;
    background: #c4d4fb;
  }

  .track {
    flex: 1;
    padding-left: 16px;
    background: #f6f5f1;
  }

  .thumb {
    height: 15px;
    border: 1px solid #a9c0f2;
    border-radius: 2px;
    background:
      repeating-linear-gradient(90deg, #8aa8e8 0 1px, #eef4fe 1px 2px) 50% 50% / 8px 7px no-repeat,
      linear-gradient(#cfdefd, #b9cdfa);
  }

  .jumps {
    display: flex;
    gap: 1px;
    width: 67px;
    padding: 2px 0 1px;
  }

  .jumps button {
    width: 16px;
    box-sizing: border-box;
    border: 1px solid #0c3c78;
    border-radius: 3px;
    background: #f4f3ee;
  }

  .status {
    display: flex;
    gap: 2px;
    height: 25px;
    padding: 3px 0 1px;
    box-sizing: border-box;
    background: #ece9d8;
  }

  .status span {
    flex: none;
    width: 62px;
    box-sizing: border-box;
    border: 1px solid #aca899;
  }

  .status .wide {
    flex: 1;
    border-left: 0;
  }

  .status .time {
    width: 122px;
    text-align: center;
    font: bold 13px/18px "Liberation Sans", Arial, sans-serif;
  }

  .status .mid {
    width: 102px;
  }

  .status .last {
    width: 60px;
    border-right: 0;
  }
</style>
